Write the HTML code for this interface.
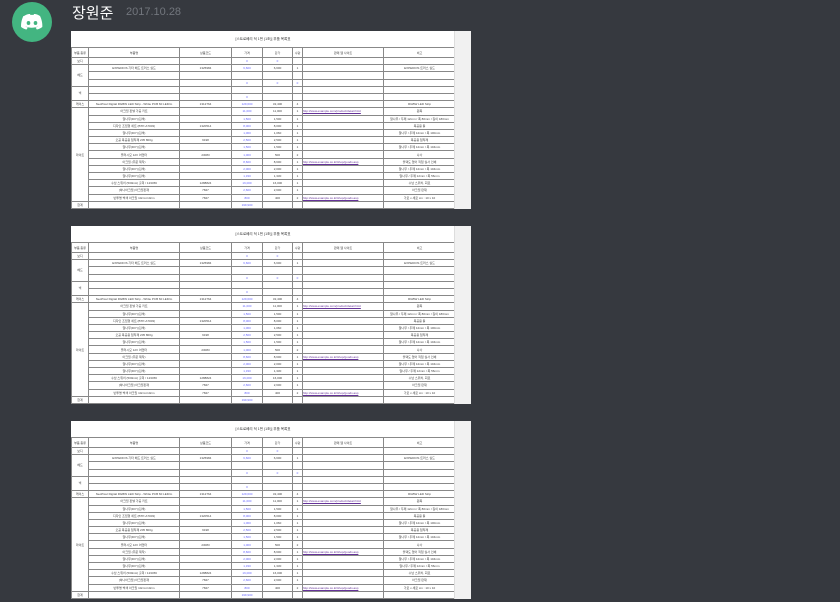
<!DOCTYPE html>
<html><head><meta charset="utf-8"><style>
body{margin:0;width:840px;height:602px;background:#36393f;font-family:"Liberation Sans","Noto Sans CJK KR",sans-serif;overflow:hidden;position:relative}
.av{position:absolute;left:12px;top:2px;width:40px;height:40px;border-radius:50%;background:#43b581}
.name{position:absolute;left:72px;top:2px;color:#fff;font-size:15px}
.ts{position:absolute;left:126px;top:6px;color:#72767d;font-size:11px}
.img{position:absolute;left:71px;width:400px;height:178px;background:#fff;overflow:hidden}
.img .side{position:absolute;right:0;top:0;width:16px;height:178px;background:#f1f1f1;border-left:1px solid #ddd}
table{position:absolute;left:0;top:16px;border-collapse:collapse;font-size:3px;line-height:4px;color:#444;table-layout:fixed;width:384px}
td{border:0.5px solid #888;height:6.2px;padding:0;text-align:center;white-space:nowrap;overflow:hidden;line-height:4px}
.t{position:absolute;top:6px;left:0;width:384px;text-align:center;font-size:3.5px;color:#333}
.b{color:#66f}.l{color:#639;text-decoration:underline;text-align:left}
th{border:0.5px solid #888;height:9px;font-size:3px;font-weight:normal;line-height:4px;padding:0}
</style></head><body>
<div class="av"><svg width="40" height="40" viewBox="0 0 40 40"><path d="M12 14c3-2 5-2 6-2l.5 1c1-.2 2-.2 3 0l.5-1c1 0 3 0 6 2 2 4 2.5 8 2.3 11-2 1.5-4 2.3-5.5 2.5l-1.2-2c1-.3 2-.8 2.6-1.3-4 2-9 2-13 0 .6.5 1.6 1 2.6 1.3l-1.2 2c-1.5-.2-3.5-1-5.5-2.5-.2-3 .3-7 2.300-11z" fill="#fff"/><ellipse cx="16.5" cy="21" rx="1.8" ry="2" fill="#43b581"/><ellipse cx="23.5" cy="21" rx="1.8" ry="2" fill="#43b581"/></svg></div>
<div class="name">장원준</div><div class="ts">2017.10.28</div>

<div class="img" style="top:31px">
<div class="t">[스트로베리 덕 1번 (1조)] 부품 목록표</div>
<table><colgroup><col style="width:17px"><col style="width:91px"><col style="width:52px"><col style="width:31px"><col style="width:30px"><col style="width:10px"><col style="width:81px"><col style="width:72px"></colgroup>
<tr><th>부품 종류</th><th>부품명</th><th>상품코드</th><th>가격</th><th>단가</th><th>수량</th><th>판매 웹 사이트</th><th>비고</th></tr>
<tr><td>보디</td><td></td><td></td><td class="b">0</td><td class="b">0</td><td></td><td></td><td></td></tr>
<tr><td rowspan="3">헤드</td><td>EXPEDIOS 기타 헤드 트러스 실드</td><td>1325984</td><td class="b">6,600</td><td>6,600</td><td>1</td><td></td><td>EXPEDIOS 트러스 실드</td></tr>
<tr><td></td><td></td><td></td><td></td><td></td><td></td><td></td></tr>
<tr><td></td><td></td><td class="b">0</td><td class="b">0</td><td class="b">0</td><td></td><td></td></tr>
<tr><td rowspan="2">넥</td><td></td><td></td><td></td><td></td><td></td><td></td><td></td></tr>
<tr><td></td><td></td><td class="b">0</td><td></td><td></td><td></td><td></td></tr>
<tr><td>케이스</td><td>NeoPixel Digital RGBW LED Strip - White PCB 60 LED/m</td><td>1312764</td><td class="b">129,600</td><td>32,400</td><td>4</td><td></td><td>RGBW LED Strip</td></tr>
<tr><td rowspan="13">라이트</td><td>아크릴 판넬 가공 키트</td><td></td><td class="b">11,000</td><td>11,000</td><td>1</td><td class="l">http://www.example.com/product/detail.html</td><td>원목</td></tr>
<tr><td>알나무(DIY)(흰색)</td><td></td><td class="b">1,500</td><td>1,500</td><td>1</td><td></td><td>알나무 / 두께 12mm / 폭 80mm / 길이 180mm</td></tr>
<tr><td>디자인 조립형 세트 (BTP-A7003)</td><td>1320514</td><td class="b">8,000</td><td>8,000</td><td>1</td><td></td><td>목공용 툴</td></tr>
<tr><td>알나무(DIY)(흰색)</td><td></td><td class="b">1,060</td><td>1,060</td><td>1</td><td></td><td>알나무 / 두께 12mm / 폭 100mm</td></tr>
<tr><td>오공 목공용 접착제 205 800g</td><td>9198</td><td class="b">2,500</td><td>2,500</td><td>1</td><td></td><td>목공용 접착제</td></tr>
<tr><td>알나무(DIY)(흰색)</td><td></td><td class="b">1,500</td><td>1,500</td><td>1</td><td></td><td>알나무 / 두께 12mm / 폭 104mm</td></tr>
<tr><td>플러시모 12V 어댑터</td><td>23083</td><td class="b">1,000</td><td>500</td><td>2</td><td></td><td>나사</td></tr>
<tr><td>아크릴 (주문 제작)</td><td></td><td class="b">8,600</td><td>8,600</td><td>1</td><td class="l">http://www.example.co.kr/shop/goods.asp</td><td>블랙도 없어 직접 실사 인쇄</td></tr>
<tr><td>알나무(DIY)(흰색)</td><td></td><td class="b">2,000</td><td>2,000</td><td>1</td><td></td><td>알나무 / 두께 12mm / 폭 104mm</td></tr>
<tr><td>알나무(DIY)(흰색)</td><td></td><td class="b">1,330</td><td>1,330</td><td>1</td><td></td><td>알나무 / 두께 12mm / 폭 56mm</td></tr>
<tr><td>수납 스위치 (500mA) 출력 / 123456</td><td>1288824</td><td class="b">16,000</td><td>16,000</td><td>1</td><td></td><td>수납 스위치, 회로</td></tr>
<tr><td>[하나아크릴] 아크릴판재</td><td>7847</td><td class="b">2,600</td><td>2,600</td><td>1</td><td></td><td>아크릴 판재</td></tr>
<tr><td>반투명 백색 아크릴 10cm×10cm</td><td>7847</td><td class="b">800</td><td>400</td><td>2</td><td class="l">http://www.example.co.kr/shop/goods.asp</td><td>가로 x 세로 cm : 10 x 10</td></tr>
<tr><td>합계</td><td></td><td></td><td class="b">199,900</td><td></td><td></td><td></td><td></td></tr>
</table><div class="side"></div></div>

<div class="img" style="top:226px">
<div class="t">[스트로베리 덕 1번 (1조)] 부품 목록표</div>
<table><colgroup><col style="width:17px"><col style="width:91px"><col style="width:52px"><col style="width:31px"><col style="width:30px"><col style="width:10px"><col style="width:81px"><col style="width:72px"></colgroup>
<tr><th>부품 종류</th><th>부품명</th><th>상품코드</th><th>가격</th><th>단가</th><th>수량</th><th>판매 웹 사이트</th><th>비고</th></tr>
<tr><td>보디</td><td></td><td></td><td class="b">0</td><td class="b">0</td><td></td><td></td><td></td></tr>
<tr><td rowspan="3">헤드</td><td>EXPEDIOS 기타 헤드 트러스 실드</td><td>1325984</td><td class="b">6,600</td><td>6,600</td><td>1</td><td></td><td>EXPEDIOS 트러스 실드</td></tr>
<tr><td></td><td></td><td></td><td></td><td></td><td></td><td></td></tr>
<tr><td></td><td></td><td class="b">0</td><td class="b">0</td><td class="b">0</td><td></td><td></td></tr>
<tr><td rowspan="2">넥</td><td></td><td></td><td></td><td></td><td></td><td></td><td></td></tr>
<tr><td></td><td></td><td class="b">0</td><td></td><td></td><td></td><td></td></tr>
<tr><td>케이스</td><td>NeoPixel Digital RGBW LED Strip - White PCB 60 LED/m</td><td>1312764</td><td class="b">129,600</td><td>32,400</td><td>4</td><td></td><td>RGBW LED Strip</td></tr>
<tr><td rowspan="13">라이트</td><td>아크릴 판넬 가공 키트</td><td></td><td class="b">11,000</td><td>11,000</td><td>1</td><td class="l">http://www.example.com/product/detail.html</td><td>원목</td></tr>
<tr><td>알나무(DIY)(흰색)</td><td></td><td class="b">1,500</td><td>1,500</td><td>1</td><td></td><td>알나무 / 두께 12mm / 폭 80mm / 길이 180mm</td></tr>
<tr><td>디자인 조립형 세트 (BTP-A7003)</td><td>1320514</td><td class="b">8,000</td><td>8,000</td><td>1</td><td></td><td>목공용 툴</td></tr>
<tr><td>알나무(DIY)(흰색)</td><td></td><td class="b">1,060</td><td>1,060</td><td>1</td><td></td><td>알나무 / 두께 12mm / 폭 100mm</td></tr>
<tr><td>오공 목공용 접착제 205 800g</td><td>9198</td><td class="b">2,500</td><td>2,500</td><td>1</td><td></td><td>목공용 접착제</td></tr>
<tr><td>알나무(DIY)(흰색)</td><td></td><td class="b">1,500</td><td>1,500</td><td>1</td><td></td><td>알나무 / 두께 12mm / 폭 104mm</td></tr>
<tr><td>플러시모 12V 어댑터</td><td>23083</td><td class="b">1,000</td><td>500</td><td>2</td><td></td><td>나사</td></tr>
<tr><td>아크릴 (주문 제작)</td><td></td><td class="b">8,600</td><td>8,600</td><td>1</td><td class="l">http://www.example.co.kr/shop/goods.asp</td><td>블랙도 없어 직접 실사 인쇄</td></tr>
<tr><td>알나무(DIY)(흰색)</td><td></td><td class="b">2,000</td><td>2,000</td><td>1</td><td></td><td>알나무 / 두께 12mm / 폭 104mm</td></tr>
<tr><td>알나무(DIY)(흰색)</td><td></td><td class="b">1,330</td><td>1,330</td><td>1</td><td></td><td>알나무 / 두께 12mm / 폭 56mm</td></tr>
<tr><td>수납 스위치 (500mA) 출력 / 123456</td><td>1288824</td><td class="b">16,000</td><td>16,000</td><td>1</td><td></td><td>수납 스위치, 회로</td></tr>
<tr><td>[하나아크릴] 아크릴판재</td><td>7847</td><td class="b">2,600</td><td>2,600</td><td>1</td><td></td><td>아크릴 판재</td></tr>
<tr><td>반투명 백색 아크릴 10cm×10cm</td><td>7847</td><td class="b">800</td><td>400</td><td>2</td><td class="l">http://www.example.co.kr/shop/goods.asp</td><td>가로 x 세로 cm : 10 x 10</td></tr>
<tr><td>합계</td><td></td><td></td><td class="b">199,900</td><td></td><td></td><td></td><td></td></tr>
</table><div class="side"></div></div>

<div class="img" style="top:421px">
<div class="t">[스트로베리 덕 1번 (1조)] 부품 목록표</div>
<table><colgroup><col style="width:17px"><col style="width:91px"><col style="width:52px"><col style="width:31px"><col style="width:30px"><col style="width:10px"><col style="width:81px"><col style="width:72px"></colgroup>
<tr><th>부품 종류</th><th>부품명</th><th>상품코드</th><th>가격</th><th>단가</th><th>수량</th><th>판매 웹 사이트</th><th>비고</th></tr>
<tr><td>보디</td><td></td><td></td><td class="b">0</td><td class="b">0</td><td></td><td></td><td></td></tr>
<tr><td rowspan="3">헤드</td><td>EXPEDIOS 기타 헤드 트러스 실드</td><td>1325984</td><td class="b">6,600</td><td>6,600</td><td>1</td><td></td><td>EXPEDIOS 트러스 실드</td></tr>
<tr><td></td><td></td><td></td><td></td><td></td><td></td><td></td></tr>
<tr><td></td><td></td><td class="b">0</td><td class="b">0</td><td class="b">0</td><td></td><td></td></tr>
<tr><td rowspan="2">넥</td><td></td><td></td><td></td><td></td><td></td><td></td><td></td></tr>
<tr><td></td><td></td><td class="b">0</td><td></td><td></td><td></td><td></td></tr>
<tr><td>케이스</td><td>NeoPixel Digital RGBW LED Strip - White PCB 60 LED/m</td><td>1312764</td><td class="b">129,600</td><td>32,400</td><td>4</td><td></td><td>RGBW LED Strip</td></tr>
<tr><td rowspan="13">라이트</td><td>아크릴 판넬 가공 키트</td><td></td><td class="b">11,000</td><td>11,000</td><td>1</td><td class="l">http://www.example.com/product/detail.html</td><td>원목</td></tr>
<tr><td>알나무(DIY)(흰색)</td><td></td><td class="b">1,500</td><td>1,500</td><td>1</td><td></td><td>알나무 / 두께 12mm / 폭 80mm / 길이 180mm</td></tr>
<tr><td>디자인 조립형 세트 (BTP-A7003)</td><td>1320514</td><td class="b">8,000</td><td>8,000</td><td>1</td><td></td><td>목공용 툴</td></tr>
<tr><td>알나무(DIY)(흰색)</td><td></td><td class="b">1,060</td><td>1,060</td><td>1</td><td></td><td>알나무 / 두께 12mm / 폭 100mm</td></tr>
<tr><td>오공 목공용 접착제 205 800g</td><td>9198</td><td class="b">2,500</td><td>2,500</td><td>1</td><td></td><td>목공용 접착제</td></tr>
<tr><td>알나무(DIY)(흰색)</td><td></td><td class="b">1,500</td><td>1,500</td><td>1</td><td></td><td>알나무 / 두께 12mm / 폭 104mm</td></tr>
<tr><td>플러시모 12V 어댑터</td><td>23083</td><td class="b">1,000</td><td>500</td><td>2</td><td></td><td>나사</td></tr>
<tr><td>아크릴 (주문 제작)</td><td></td><td class="b">8,600</td><td>8,600</td><td>1</td><td class="l">http://www.example.co.kr/shop/goods.asp</td><td>블랙도 없어 직접 실사 인쇄</td></tr>
<tr><td>알나무(DIY)(흰색)</td><td></td><td class="b">2,000</td><td>2,000</td><td>1</td><td></td><td>알나무 / 두께 12mm / 폭 104mm</td></tr>
<tr><td>알나무(DIY)(흰색)</td><td></td><td class="b">1,330</td><td>1,330</td><td>1</td><td></td><td>알나무 / 두께 12mm / 폭 56mm</td></tr>
<tr><td>수납 스위치 (500mA) 출력 / 123456</td><td>1288824</td><td class="b">16,000</td><td>16,000</td><td>1</td><td></td><td>수납 스위치, 회로</td></tr>
<tr><td>[하나아크릴] 아크릴판재</td><td>7847</td><td class="b">2,600</td><td>2,600</td><td>1</td><td></td><td>아크릴 판재</td></tr>
<tr><td>반투명 백색 아크릴 10cm×10cm</td><td>7847</td><td class="b">800</td><td>400</td><td>2</td><td class="l">http://www.example.co.kr/shop/goods.asp</td><td>가로 x 세로 cm : 10 x 10</td></tr>
<tr><td>합계</td><td></td><td></td><td class="b">199,900</td><td></td><td></td><td></td><td></td></tr>
</table><div class="side"></div></div>
</body></html>
